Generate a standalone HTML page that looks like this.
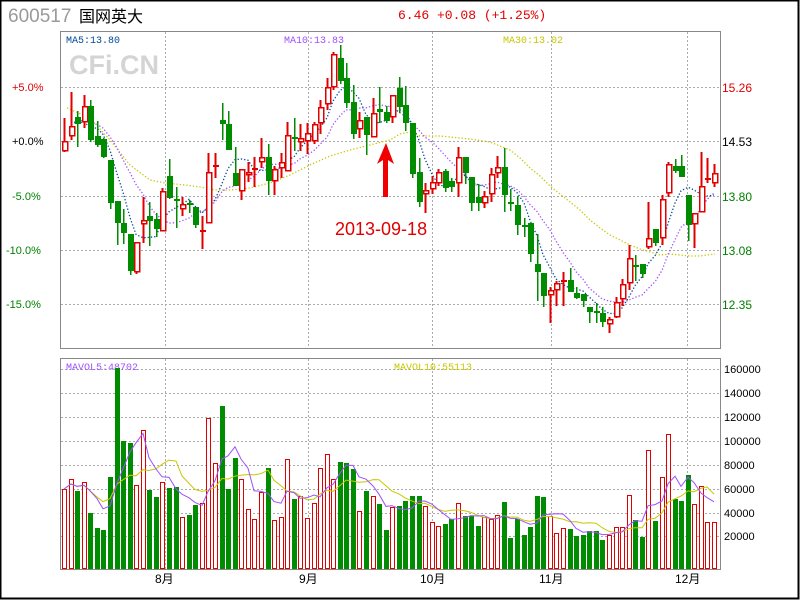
<!DOCTYPE html>
<html><head><meta charset="utf-8">
<style>
html,body{margin:0;padding:0;background:#fff;}
body{width:800px;height:600px;overflow:hidden;position:relative;}
svg{position:absolute;left:0;top:0;}
</style></head>
<body>
<svg id="s" width="800" height="600" xmlns="http://www.w3.org/2000/svg" font-family="Liberation Sans, Noto Sans CJK SC, sans-serif">
<rect x="0.5" y="0.5" width="798" height="598" fill="#fff" stroke="#000" stroke-width="2"/>
<text x="8" y="22" font-size="19" fill="#999">600517</text>
<text x="79" y="22" font-size="16" fill="#000" font-family="Liberation Sans, Noto Sans CJK SC, sans-serif">国网英大</text>
<text x="398" y="19" font-size="13" fill="#e00000" font-family="Liberation Mono, monospace">6.46 +0.08 (+1.25%)</text>
<rect x="60.5" y="31.5" width="660" height="317" fill="none" stroke="#888"/>
<rect x="60.5" y="358.5" width="660" height="211" fill="none" stroke="#888"/>
<g stroke="#aaa" stroke-dasharray="2,2" stroke-width="1">
<line x1="61" x2="720" y1="87.5" y2="87.5"/><line x1="61" x2="720" y1="141.5" y2="141.5"/>
<line x1="61" x2="720" y1="196.5" y2="196.5"/><line x1="61" x2="720" y1="250.5" y2="250.5"/>
<line x1="61" x2="720" y1="304.5" y2="304.5"/>
<line x1="165.5" x2="165.5" y1="32" y2="348"/><line x1="308.5" x2="308.5" y1="32" y2="348"/>
<line x1="432.5" x2="432.5" y1="32" y2="348"/><line x1="551.5" x2="551.5" y1="32" y2="348"/>
<line x1="687.5" x2="687.5" y1="32" y2="348"/>
<line x1="165.5" x2="165.5" y1="359" y2="569"/><line x1="308.5" x2="308.5" y1="359" y2="569"/>
<line x1="432.5" x2="432.5" y1="359" y2="569"/><line x1="551.5" x2="551.5" y1="359" y2="569"/>
<line x1="687.5" x2="687.5" y1="359" y2="569"/>
<line x1="61" x2="720" y1="369.5" y2="369.5"/><line x1="61" x2="720" y1="393.5" y2="393.5"/>
<line x1="61" x2="720" y1="417.5" y2="417.5"/><line x1="61" x2="720" y1="441.5" y2="441.5"/>
<line x1="61" x2="720" y1="465.5" y2="465.5"/><line x1="61" x2="720" y1="489.5" y2="489.5"/>
<line x1="61" x2="720" y1="513.5" y2="513.5"/><line x1="61" x2="720" y1="536.5" y2="536.5"/>
</g>
<text x="69" y="74" font-size="27" font-weight="bold" fill="#d4d4d4">CFi.CN</text>
<g font-family="Liberation Mono, monospace" font-size="10">
<text x="66" y="43" fill="#004a99">MA5:13.80</text>
<text x="284" y="43" fill="#a050ff">MA10:13.83</text>
<text x="503" y="43" fill="#c8c800">MA30:13.02</text>
<text x="66" y="370" fill="#a050ff">MAVOL5:48702</text>
<text x="394" y="370" fill="#c8c800">MAVOL10:55113</text>
</g>
<g font-size="11">
<text x="12" y="91" fill="#e00000">+5.0%</text>
<text x="12" y="145" fill="#000">+0.0%</text>
<text x="12" y="200" fill="#008000">-5.0%</text>
<text x="6" y="254" fill="#008000">-10.0%</text>
<text x="6" y="308" fill="#008000">-15.0%</text>
</g>
<g font-size="12">
<text x="722" y="92" fill="#e00000">15.26</text>
<text x="722" y="146" fill="#000">14.53</text>
<text x="722" y="201" fill="#008000">13.80</text>
<text x="722" y="255" fill="#008000">13.08</text>
<text x="722" y="309" fill="#008000">12.35</text>
</g>
<g font-size="11" fill="#000">
<text x="724" y="373">160000</text><text x="724" y="397">140000</text>
<text x="724" y="421">120000</text><text x="724" y="445">100000</text>
<text x="724" y="469">80000</text><text x="724" y="493">60000</text>
<text x="724" y="517">40000</text><text x="724" y="540">20000</text>
</g>
<g font-size="12" fill="#000">
<text x="155" y="583">8月</text><text x="299" y="583">9月</text>
<text x="420" y="583">10月</text><text x="539" y="583">11月</text><text x="675" y="583">12月</text>
</g>
<text x="335" y="235" font-size="18" fill="#e00000">2013-09-18</text>
<polygon points="386,143 394,164 388,160 388,197 383,197 383,160 377,164" fill="#f00000"/>
<g id="g" shape-rendering="crispEdges"></g>
</svg>
<script>
(function(){
var C=[
['R',151,141,118,152],['R',136,126,92,140],['G',117,124,111,147],['R',122,106,95,128],['G',106,140,100,142],
['G',136,145,121,147],['G',139,157,138,158],['G',160,203,160,209],['G',201,223,201,245],['G',223,233,209,244],
['G',234,271,234,275],['R',272,242,242,274],['R',224,220,197,243],['G',216,221,202,246],['G',219,229,213,237],
['R',231,191,188,231],['G',176,198,159,199],['G',199,199,187,228],['R',209,204,197,216],['G',203,205,200,213],
['G',207,225,207,228],['R',231,231,216,249],['R',223,172,153,223],['R',166,166,153,178],['G',120,124,103,140],
['G',124,150,111,150],['G',173,186,147,186],['R',191,169,169,200],['R',175,172,162,182],['R',169,169,157,187],
['R',162,157,138,168],['G',157,181,144,195],['R',181,169,166,195],['R',168,162,153,178],['R',171,135,122,171],
['G',137,137,118,151],['R',142,138,124,151],['R',141,133,123,154],['R',141,124,122,144],['R',123,107,100,134],
['R',104,87,78,110],['R',87,54,52,90],['G',58,81,45,84],['G',78,103,63,108],['G',102,134,85,139],
['R',129,120,112,138],['G',117,135,117,155],['R',137,113,98,137],['G',109,112,87,123],['G',112,121,106,123],
['R',117,95,95,123],['G',88,107,77,113],['G',105,123,86,131],['G',123,174,123,178],['G',172,202,158,207],
['R',194,190,183,213],['R',189,182,176,194],['R',183,172,169,186],['G',171,188,169,192],['G',181,187,178,192],
['R',183,157,147,197],['G',157,173,157,184],['G',177,203,177,211],['G',197,203,184,211],['R',203,196,191,208],
['R',194,174,168,202],['R',173,167,156,178],['G',167,195,148,212],['G',202,202,189,211],['G',205,225,196,235],
['G',225,226,218,237],['G',223,254,223,262],['G',264,272,234,301],['G',273,296,273,307],['R',295,290,287,323],
['R',290,283,281,306],['R',281,281,272,306],['G',280,292,268,292],['G',293,298,287,299],['G',294,301,294,307],
['G',307,312,307,323],['G',311,313,303,323],['G',313,322,307,327],['R',324,319,317,333],['R',317,302,297,318],
['R',299,284,279,306],['R',283,258,245,290],['G',265,265,255,281],['G',264,274,264,278],['R',247,238,202,249],
['G',229,243,229,246],['R',238,199,195,245],['R',193,164,162,197],['G',166,171,159,173],['G',166,177,155,177],
['G',195,225,195,241],['R',224,213,213,248],['R',212,186,152,212],['R',179,179,158,183],['R',183,173,164,187]];
var V=[['R',489],['R',479],['G',491],['R',482],['G',513],['G',528],['G',530],['G',477],['G',368],['G',441],['G',443],['R',485],['R',430],['G',490],['G',497],['R',482],['G',488],['G',487],['R',517],['G',515],['G',505],['R',503],['R',418],['R',463],['G',406],['G',489],['G',458],['R',479],['R',509],['R',519],['R',492],['G',468],['R',520],['R',517],['R',459],['G',499],['R',496],['R',518],['R',503],['R',468],['R',454],['R',479],['G',462],['G',463],['G',469],['R',511],['G',491],['R',496],['G',504],['G',530],['R',507],['G',506],
['G',501],['G',496],['G',496],['R',506],['R',522],['R',526],['G',524],['G',519],['R',503],['G',516],['G',516],['G',526],['R',517],['R',519],['R',515],['G',502],['G',538],['G',519],['G',535],['G',527],['G',496],['G',497],['R',516],['R',533],['R',528],['G',529],['G',536],['G',535],['G',531],['G',531],['G',540],['R',535],['R',527],['R',527],['R',495],['G',520],['G',537],['R',450],['G',521],['R',477],['R',434],['G',499],['G',501],['G',475],['R',504],['R',486],['R',522],['R',522]];
var NS='http://www.w3.org/2000/svg',g=document.getElementById('g');
var RED='#e00000',GRN='#008c00';
function el(tag,a){var e=document.createElementNS(NS,tag);for(var k in a)e.setAttribute(k,String(a[k]));g.appendChild(e);return e;}
function X(i){return Math.round(64+i*6.566);}
var i;
for(i=0;i<V.length;i++){var vx=X(i)-2,vt=V[i][1];
 if(V[i][0]=='R')el('rect',{x:vx+0.5,y:vt+0.5,width:4,height:568-vt,fill:'#fff',stroke:RED,'stroke-width':1});
 else el('rect',{x:vx,y:vt,width:5,height:569-vt,fill:GRN});}
function ma(arr,n){var o=[];for(var a=0;a<arr.length;a++){var s=0,c=0;for(var j=Math.max(0,a-n+1);j<=a;j++){s+=arr[j];c++;}o.push(s/c);}return o;}
var vv=V.map(function(v){return 569-v[1];});
var m5=ma(vv,5),m10=ma(vv,10),p5='',p10='';
for(i=0;i<V.length;i++){p5+=X(i)+','+(569-m5[i]).toFixed(1)+' ';p10+=X(i)+','+(569-m10[i]).toFixed(1)+' ';}
el('polyline',{points:p10,fill:'none',stroke:'#c8c800','stroke-width':1,'shape-rendering':'auto'});
el('polyline',{points:p5,fill:'none',stroke:'#a050ff','stroke-width':1,'shape-rendering':'auto'});
var cl=C.map(function(c){return c[0]=='R'?Math.min(c[1],c[2]):Math.max(c[1],c[2]);});
var pre=[128,126,124,122,120,118,116,114,112];var cl2=pre.concat(cl);
var a5=ma(cl2,5).slice(9),a10=ma(cl2,10).slice(9);var q5='',q10='';
for(i=1;i<C.length;i++){q5+=X(i)+','+a5[i].toFixed(1)+' ';q10+=X(i)+','+a10[i].toFixed(1)+' ';}
var m30=[[67,108],[90,118],[110,140],[130,165],[150,180],[165,183],[185,185],[200,187],[215,190],[230,190],[250,188],[270,183],[290,175],[310,165],[330,156],[350,150],[370,145],[390,140],[400,134],[410,132],[420,136],[440,136],[460,138],[470,139],[490,142],[500,146],[510,150],[520,158],[530,168],[540,176],[550,186],[560,194],[570,202],[580,210],[590,220],[600,228],[610,235],[620,240],[630,245],[640,249],[650,252],[660,255],[670,254],[680,255],[690,256],[700,256],[715,254]];
el('polyline',{points:m30.join(' '),fill:'none',stroke:'#c8c800','stroke-width':1.3,'stroke-dasharray':'1.3,2','shape-rendering':'auto'});
el('polyline',{points:q10,fill:'none',stroke:'#a050ff','stroke-width':1.3,'stroke-dasharray':'1.3,2','shape-rendering':'auto'});
el('polyline',{points:q5,fill:'none',stroke:'#004a99','stroke-width':1.3,'stroke-dasharray':'1.3,2','shape-rendering':'auto'});
for(i=0;i<C.length;i++){var c=C[i],cx=X(i),tp=Math.min(c[1],c[2]),bt=Math.max(c[1],c[2]),hi=c[3],lo=c[4];
 if(c[0]=='R'){
  el('line',{x1:cx+0.5,x2:cx+0.5,y1:hi,y2:tp,stroke:RED,'stroke-width':2});
  el('line',{x1:cx+0.5,x2:cx+0.5,y1:bt,y2:lo,stroke:RED,'stroke-width':2});
  if(bt-tp<3)el('rect',{x:cx-2,y:tp-1,width:6,height:2,fill:RED});
  else el('rect',{x:cx-1.5,y:tp+0.5,width:5,height:bt-tp-1,fill:'#fff',stroke:RED,'stroke-width':1.5});
 }else{
  el('line',{x1:cx+0.5,x2:cx+0.5,y1:hi,y2:lo,stroke:GRN,'stroke-width':1.5});
  el('rect',{x:cx-2,y:tp,width:6,height:Math.max(2,bt-tp),fill:GRN});
 }}
})();
</script>
</body></html>
